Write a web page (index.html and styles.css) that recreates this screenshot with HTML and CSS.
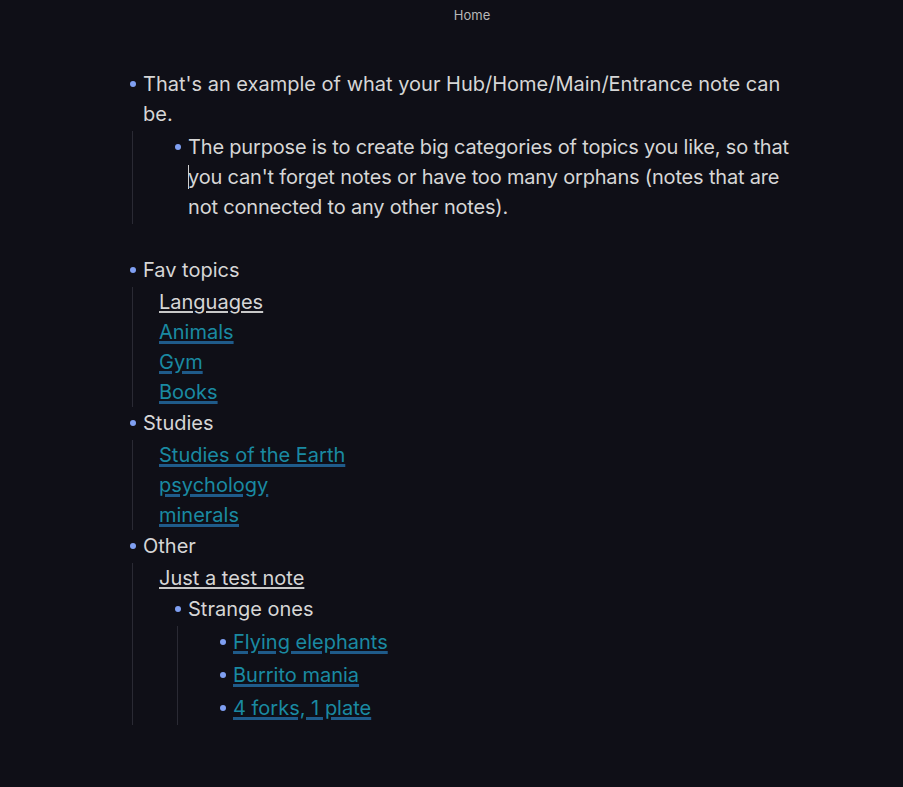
FILE: index.html
```html
<!DOCTYPE html>
<html lang="en">
<head>
<meta charset="utf-8">
<title>Home</title>
<link rel="stylesheet" href="styles.css">
</head>
<body>
<header class="titlebar"><span class="title">Home</span></header>
<main class="note">
  <div class="li">
    <div class="row"><span class="dot"></span><span class="txt">That's an example of what your Hub/Home/Main/Entrance note can<br>be.</span></div>
    <div class="kids">
      <div class="li sub">
        <div class="row"><span class="dot"></span><span class="txt tight">The purpose is to create big categories of topics you like, so that<br><span class="caret"></span>you can't forget notes or have too many orphans (notes that are<br>not connected to any other notes).</span></div>
      </div>
    </div>
  </div>
  <div class="blank"></div>
  <div class="li">
    <div class="row"><span class="dot"></span><span class="txt">Fav topics</span></div>
    <div class="kids">
      <div class="plain"><a class="link unres">Languages</a></div>
      <div class="plain"><a class="link">Animals</a></div>
      <div class="plain"><a class="link">Gym</a></div>
      <div class="plain"><a class="link">Books</a></div>
    </div>
  </div>
  <div class="li">
    <div class="row"><span class="dot"></span><span class="txt">Studies</span></div>
    <div class="kids">
      <div class="plain"><a class="link">Studies of the Earth</a></div>
      <div class="plain"><a class="link">psychology</a></div>
      <div class="plain"><a class="link">minerals</a></div>
    </div>
  </div>
  <div class="li">
    <div class="row"><span class="dot"></span><span class="txt">Other</span></div>
    <div class="kids">
      <div class="plain"><a class="link unres">Just a test note</a></div>
      <div class="li sub">
        <div class="row"><span class="dot"></span><span class="txt">Strange ones</span></div>
        <div class="kids">
          <div class="li sub"><div class="row"><span class="dot"></span><span class="txt"><a class="link">Flying elephants</a></span></div></div>
          <div class="li sub"><div class="row"><span class="dot"></span><span class="txt"><a class="link">Burrito mania</a></span></div></div>
          <div class="li sub"><div class="row"><span class="dot"></span><span class="txt"><a class="link">4 forks, 1 plate</a></span></div></div>
        </div>
      </div>
    </div>
  </div>
</main>
</body>
</html>
```
FILE: styles.css
```css
html, body {
  margin: 0;
  padding: 0;
  background: #0f0f17;
  height: 100%;
}
body {
  font-family: Inter, "Noto Sans", sans-serif;
  color: #d6d6d6;
}
.titlebar {
  height: 30px;
  display: flex;
  align-items: center;
  justify-content: center;
  padding-left: 41px;
}
.title {
  font-size: 13px;
  color: #b8b8b8;
}
.note {
  padding-top: 38px;
  padding-left: 128px;
  width: 720px;
  font-size: 20px;
  line-height: 30px;
  white-space: nowrap;
}
.li {
  display: block;
}
.row {
  display: flex;
  padding: 1px 0 2px;
}
.dot {
  flex: 0 0 15px;
  height: 30px;
  position: relative;
}
.dot::before {
  content: "";
  position: absolute;
  left: 2px;
  top: 12px;
  width: 6px;
  height: 6px;
  border-radius: 50%;
  background: #7f9ff2;
}
.txt {
  flex: 1;
}
.tight {
  letter-spacing: -0.18px;
}
.kids {
  margin-left: 4px;
  border-left: 1px solid #2a2a34;
}
.sub {
  padding-left: 40px;
}
.plain {
  padding-left: 26px;
  height: 30px;
}
.blank {
  height: 30px;
}
.caret {
  display: inline-block;
  width: 0;
  height: 24px;
  border-left: 1px solid #cfcfcf;
  vertical-align: -5px;
  margin-right: -1px;
}
.link {
  color: #1a8aa2;
  text-decoration: underline;
  text-decoration-color: #1f5b8a;
  text-decoration-thickness: 3px;
  text-underline-offset: 2px;
}
.link.unres {
  color: #d6d6d6;
  text-decoration-color: #c8c8c8;
  text-decoration-thickness: 2px;
}
```
